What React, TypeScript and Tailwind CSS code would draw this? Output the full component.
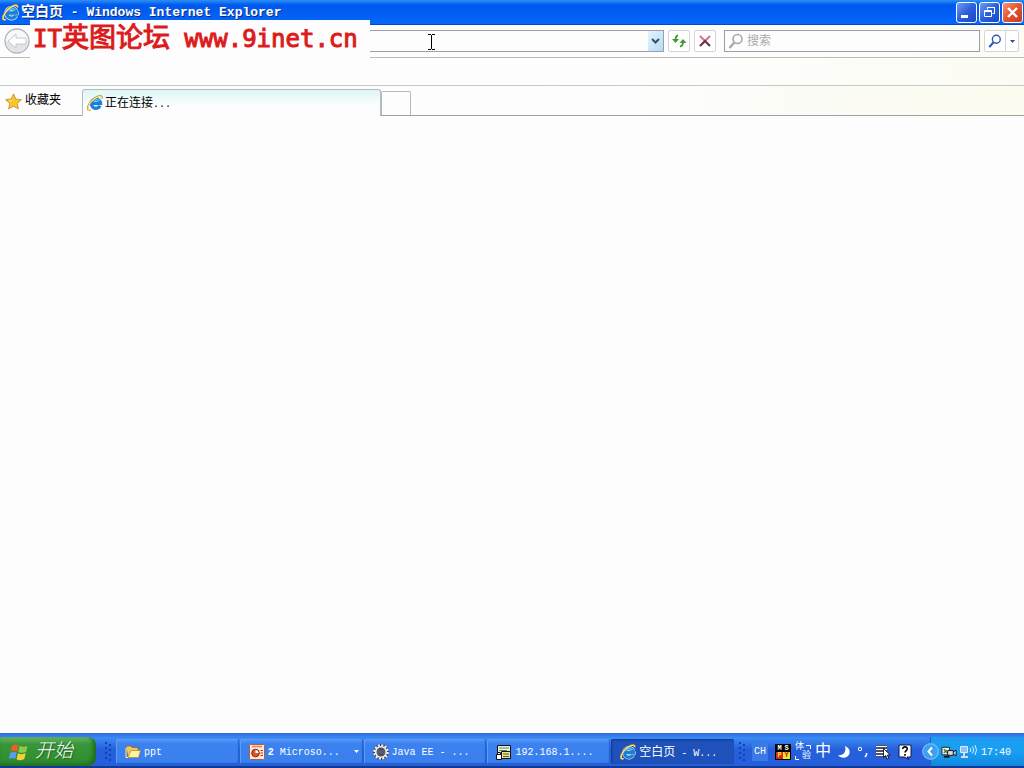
import React from "react";

function IeLogo({ className }: { className?: string }) {
  return (
    <svg viewBox="0 0 16 16" className={className} fill="none" aria-hidden="true">
      <path d="M13 10.800A4.600 4.600 0 1 1 13.500 8.400H5.500" stroke="#d4efff" strokeWidth="4.400" />
      <path d="M13 10.800A4.600 4.600 0 1 1 13.500 8.400H5.500" stroke="#1c7fd6" strokeWidth="3.200" />
      <path d="M4.800 7A4.600 4.600 0 0 1 12.500 6" stroke="#56bdf2" strokeWidth="1.600" />
      <path d="M3.600 14.700C.9 15.600.1 14 1.200 11.200 2.700 7.300 6.800 3 11 1.400c2.800-1.100 4.300-.2 3.700 2" stroke="#b98f2e" strokeWidth="1.800" />
      <path d="M3.600 14.500C1.200 15.200.5 13.800 1.500 11.200 3 7.500 6.900 3.200 11 1.700c2.500-1 3.800-.2 3.400 1.500" stroke="#fbe68c" strokeWidth="1.200" />
    </svg>
  );
}

function Magnifier({ color, className }: { color: string; className?: string }) {
  return (
    <svg viewBox="0 0 16 16" className={className} fill="none" stroke={color} aria-hidden="true">
      <circle cx="9.500" cy="6" r="4.500" strokeWidth="1.600" />
      <path d="M6.300 9.500 1.500 15" strokeWidth="2.400" />
    </svg>
  );
}

function Grip() {
  return (
    <svg viewBox="0 0 6 22" className="h-[22px] w-[6px] shrink-0" fill="#1440b0" aria-hidden="true">
      {[1, 6, 11, 16].map((y) => (
        <g key={y}>
          <rect x="0" y={y} width="2" height="2" />
          <rect x="4" y={y + 2} width="2" height="2" />
        </g>
      ))}
    </svg>
  );
}

function TitleBar() {
  const box =
    "flex h-[21px] w-[21px] items-center justify-center rounded-[3px] border border-white";
  const blue = "bg-linear-to-br from-[#6f9cf2] via-[#2b5fdc] to-[#1c49c4]";
  return (
    <header className="flex h-[25px] shrink-0 items-center bg-linear-to-b from-[#2e8ff5] via-[#0058ee] via-20% to-[#0668fa] pr-px pl-[2px] shadow-[inset_0_-1px_0_#0347cc]">
      <IeLogo className="h-[17px] w-[17px]" />
      <h1 className="ml-[2px] flex-1 text-[13px] leading-[20px] font-bold whitespace-pre text-white [text-shadow:1px_1px_0_#0a2a80]">
        <span className="text-[14px]">空白页</span> - Windows Internet Explorer
      </h1>
      <div className="flex gap-[2px]">
        <button aria-label="最小化" className={`${box} ${blue}`}>
          <svg viewBox="0 0 19 19" className="h-[19px] w-[19px]"><rect x="4" y="12" width="7" height="3" fill="#fff" /></svg>
        </button>
        <button aria-label="还原" className={`${box} ${blue}`}>
          <svg viewBox="0 0 19 19" className="h-[19px] w-[19px]" fill="none" stroke="#fff">
            <path d="M7.500 6.500V4.500h7v6h-2M7 4.500h8" />
            <path d="M4.500 7.500h7v6h-7zM4 8.500h8" />
          </svg>
        </button>
        <button aria-label="关闭" className={`${box} bg-linear-to-br from-[#f0957b] via-[#e2532f] to-[#c83a16]`}>
          <svg viewBox="0 0 19 19" className="h-[19px] w-[19px]" stroke="#fff" strokeWidth="2.400"><path d="m5 5 9 9M14 5l-9 9" /></svg>
        </button>
      </div>
    </header>
  );
}

function NavigationBar() {
  const tool = "flex h-[22px] items-center justify-center rounded-[2px] border border-[#d3d5d9] bg-white";
  return (
    <nav className="flex h-[33px] shrink-0 items-center border-b border-[#b9bdba] bg-linear-to-r from-[#fdfdfd] from-70% to-[#fcfcf4] pr-[5px] pl-[3px]">
      <button aria-label="后退" className="h-[28px] w-[28px] shrink-0">
        <svg viewBox="0 0 28 28" className="h-[28px] w-[28px]">
          <circle cx="14" cy="14" r="12" fill="#f8f9fa" stroke="#b2b6bb" strokeWidth="1.300" />
          <path d="M3 14a11 11 0 0 0 22 0z" fill="#dfe5ea" />
          <path d="m5 14 8-7v4h10v6H13v4z" fill="#fff" stroke="#c2cad1" />
        </svg>
      </button>
      <div className="flex h-[22px] flex-1 border border-[#9b9fa6] bg-[#fdfdfd]">
        <input aria-label="地址" className="min-w-0 flex-1 bg-transparent px-2 outline-none" />
        <button aria-label="显示地址栏列表" className="flex w-[15px] items-center justify-center bg-linear-to-br from-[#e6f4fb] to-[#b4dcf3]">
          <svg viewBox="0 0 9 6" className="h-[6px] w-[9px]" fill="none" stroke="#35506e" strokeWidth="2"><path d="m1 1 3.500 3.500L8 1" /></svg>
        </button>
      </div>
      <button aria-label="刷新" className={`${tool} ml-[4px] w-[22px]`}>
        <svg viewBox="0 0 16 14" className="h-[14px] w-[16px]" fill="none" stroke="#3c9b35" strokeWidth="1.800">
          <path d="M7 1.500Q4.500 2 4.500 6M9 12.500Q12 12 12 8" />
          <path d="M1 5h7L4.500 9zM8.500 9h7L12 5z" fill="#3c9b35" stroke="none" />
        </svg>
      </button>
      <button aria-label="停止" className={`${tool} ml-[4px] w-[22px]`}>
        <svg viewBox="0 0 12 12" className="h-[12px] w-[12px]" strokeWidth="2.200">
          <path d="m1 1 5 5 5-5" fill="none" stroke="#d5768a" />
          <path d="m1 11 5-5 5 5" fill="none" stroke="#6f2f45" />
        </svg>
      </button>
      <label className="ml-[8px] flex h-[22px] w-[256px] items-center border border-[#9b9fa6] bg-[#fdfdfd] pl-[3px]">
        <Magnifier color="#a9a9a9" className="h-[16px] w-[16px]" />
        <input aria-label="搜索" placeholder="搜索" className="ml-[3px] h-[20px] min-w-0 flex-1 bg-transparent pt-[2px] text-[12px] outline-none placeholder:text-[#ababab]" />
      </label>
      <div className="ml-[4px] flex h-[22px] w-[35px] rounded-[2px] border border-[#d3d5d9] bg-white">
        <button aria-label="开始搜索" className="flex w-[20px] items-center justify-center">
          <Magnifier color="#2d55b5" className="h-[14px] w-[14px]" />
        </button>
        <button aria-label="搜索选项" className="flex flex-1 items-center justify-center border-l border-[#d3d5d9]">
          <svg viewBox="0 0 5 3" className="h-[3px] w-[5px]"><path d="M0 0h5L2.500 3z" fill="#2d4f9f" /></svg>
        </button>
      </div>
    </nav>
  );
}

function TabRow() {
  return (
    <div className="flex h-[30px] shrink-0 items-end border-b border-[#9fa3a8] bg-linear-to-r from-[#fdfdfd] from-60% to-[#fbfbef] text-[12px] text-black">
      <button className="flex h-[28px] w-[82px] items-center gap-[3px] pl-[5px]">
        <svg viewBox="0 0 16 16" className="h-[17px] w-[17px]">
          <path d="m8 .8 2.200 4.900 5.200.6-3.900 3.500 1.100 5.200L8 12.400 3.400 15l1.100-5.200L.6 6.300l5.200-.6z" fill="#fbc52c" stroke="#c98d28" strokeWidth=".8" />
          <path d="M8 3 6.600 6.600 3 7.200l3 .8z" fill="#fff0a0" />
        </svg>
        <span>收藏夹</span>
      </button>
      <button className="-mb-px flex h-[27px] w-[299px] items-center gap-[2px] rounded-t-[3px] border border-b-0 border-[#b6babe] bg-linear-to-b from-[#dcf7f6] to-[#fdfdfd] to-60% pl-[4px]">
        <IeLogo className="h-[16px] w-[16px]" />
        <span className="pt-[2px]">正在连接<span className="text-[10px]">...</span></span>
      </button>
      <button aria-label="新选项卡" className="h-[24px] w-[30px] rounded-t-[2px] border border-b-0 border-[#b6babe] bg-[#fdfdfd]" />
    </div>
  );
}

function FolderIcon() {
  return (
    <svg viewBox="0 0 16 16" className="h-[16px] w-[16px]">
      <path d="M1 3.500 2 2h4l1 1.500h6V13H3z" fill="#f0c95c" stroke="#8a6a22" strokeWidth=".8" />
      <path d="m3 13.500 3-7h9.500l-2 7z" fill="#fff2a8" stroke="#b98e2c" strokeWidth=".8" />
      <path d="M1 4v9.500h2" fill="none" stroke="#fff2b5" />
    </svg>
  );
}

function PowerPointIcon() {
  return (
    <svg viewBox="0 0 16 16" className="h-[16px] w-[16px]">
      <rect x=".5" y=".5" width="15" height="15" rx="1" fill="#fbe6d8" stroke="#b85a3c" />
      <path d="M3 2.500h10" stroke="#d98465" strokeWidth="1.500" />
      <circle cx="6.500" cy="9" r="3.800" fill="#e0562c" stroke="#7c2a14" />
      <path d="M6.500 9V6A3 3 0 0 1 9.500 9z" fill="#fff" />
      <path d="M11.500 6.500H14M11.500 9H14M11.500 11.500H14" stroke="#b7401e" />
    </svg>
  );
}

function GearIcon() {
  return (
    <svg viewBox="0 0 16 16" className="h-[16px] w-[16px]">
      <circle cx="8" cy="8" r="8" fill="#2d3360" />
      <circle cx="8" cy="8" r="6.800" fill="none" stroke="#f4f4f4" strokeWidth="2" strokeDasharray="2.200 1.360" />
      <circle cx="8" cy="8" r="5.300" fill="#4b4a5c" stroke="#f4f4f4" strokeWidth="1.600" />
      <path d="M4 7h8M4 9h8" stroke="#77758a" strokeWidth=".8" />
    </svg>
  );
}

function TerminalIcon() {
  return (
    <svg viewBox="0 0 16 16" className="h-[16px] w-[16px]">
      <path d="M1.500 1.500h13v8h-13z" fill="#eef2e6" stroke="#111" />
      <path d="M3 4h10M3 6.500h8" stroke="#558a57" strokeWidth="1.200" />
      <path d="M5.500 7.500h9v7h-9z" fill="#f3e681" stroke="#111" />
      <path d="M7 10h6M7 12.500h6" stroke="#555" />
      <path d="M.5 10.500h5v5h-5zM1.500 10.500v-2h3v2" fill="#fff" stroke="#111" />
    </svg>
  );
}

function TaskButton({ icon, children, active, menu }: { icon: React.ReactNode; children: React.ReactNode; active?: boolean; menu?: boolean }) {
  return (
    <button
      className={`flex h-[25px] min-w-0 flex-1 items-center gap-[3px] rounded-[2px] pl-[9px] text-left text-[10px] whitespace-pre text-white ${
        active
          ? "bg-[#1e51b9] shadow-[inset_1px_1px_2px_#123a91]"
          : "bg-linear-to-b from-[#5596f6] via-[#3c81f0] via-20% to-[#397fee] shadow-[inset_-1px_-1px_1px_#2460cc,inset_1px_1px_0_#5d9cf7]"
      }`}
    >
      {icon}
      <span className="flex-1 pt-[2px]">{children}</span>
      {menu && <svg viewBox="0 0 5 3" className="mr-[4px] h-[3px] w-[5px]"><path d="M0 0h5L2.500 3z" fill="#fff" /></svg>}
    </button>
  );
}

function LanguageBar() {
  return (
    <div className="flex h-[28px] shrink-0 items-center gap-[4px] text-white">
      <span className="mr-[3px] bg-[#3b79e4] px-[2px] text-[10px] leading-[18px]">CH</span>
      <span className="flex h-[16px] w-[16px] flex-col border border-black bg-black text-center text-[7px] leading-[7px] font-bold">
        <span className="flex"><span className="flex-1">M</span><span className="flex-1">S</span></span>
        <span className="flex">
          <span className="flex-1 bg-[#d9251d] text-[#ffe62b]">P</span>
          <span className="flex-1 bg-[#f4e62a] text-[#c31818]">Y</span>
        </span>
      </span>
      <span className="relative flex h-[18px] w-[16px] flex-col text-[9px] leading-[9px]">
        <span className="self-start">体</span>
        <span className="self-end">验</span>
        <svg viewBox="0 0 16 18" className="absolute inset-0 h-[18px] w-[16px]" fill="none" stroke="#fff" aria-hidden="true">
          <path d="M11 2.500h4.500V6M.5 13v3.500H4" />
        </svg>
      </span>
      <span className="text-[16px] leading-[18px]">中</span>
      <svg viewBox="0 0 14 14" className="ml-[2px] h-[14px] w-[14px]"><path d="M8 1c5 2 6 7 3 10-3 3-8 2-10-1 4 1 9-2 7-9z" fill="#fff" /></svg>
      <svg viewBox="0 0 12 14" className="ml-[2px] h-[14px] w-[12px]" fill="none" stroke="#fff"><circle cx="3" cy="4" r="1.700" /><path d="M9.500 8v2l-1.500 2" strokeWidth="1.500" /></svg>
      <svg viewBox="0 0 16 16" className="ml-[2px] h-[16px] w-[16px]">
        <path d="M1 1h11v12H1z" fill="#10183c" />
        <path d="M1 2.500h11M1 5.500h11M1 8.500h9M1 11.500h9" stroke="#fff" strokeWidth="1.500" />
        <path d="M8.500 4.500v9l2.200-2 1.600 3.500 1.500-.8-1.500-3.200h3z" fill="#fff" stroke="#000" strokeWidth=".8" />
      </svg>
      <svg viewBox="0 0 14 16" className="ml-[3px] h-[16px] w-[14px]">
        <path d="M1 1h12v12H9l2 2.500L6.500 13H1z" fill="#fff" stroke="#101a50" />
        <path d="M4.700 5c0-3 4.800-2.600 4.600 0C9.200 6.600 7 6.700 7 8.500M7 10v1.800" fill="none" stroke="#000" strokeWidth="1.600" />
      </svg>
    </div>
  );
}

function Taskbar() {
  return (
    <footer className="flex h-[35px] shrink-0 items-center border-b-2 border-[#123a94] bg-linear-to-b from-[#2b6be0] via-[#3c8af3] via-15% to-[#255fdc] to-50% pt-[4px]">
      <button className="flex h-[29px] w-[96px] shrink-0 items-center gap-[6px] rounded-r-[8px] bg-linear-to-b from-[#67b465] via-[#38973a] via-25% to-[#2e8a2d] pl-[9px] shadow-[inset_-3px_-2px_4px_#1f6b20]">
        <svg viewBox="0 0 20 18" className="h-[18px] w-[20px]">
          <path d="M3 2.500Q6 .5 9.500 2.200L8 8.500Q5 7 1.500 8.700z" fill="#ee5c2c" />
          <path d="M10.700 2.700Q14 4.600 18.500 3L17 9Q13 10.600 9.300 8.900z" fill="#8ccb48" />
          <path d="M1.200 9.900Q4.500 8.300 7.700 9.700L6.200 15.700Q3 14.300 0 16z" fill="#5b9cf4" />
          <path d="M9 10.200Q12.500 12 16.700 10.300L15.200 16.300Q11 18 7.500 16.200z" fill="#fbcd3a" />
        </svg>
        <span className="text-[19px] leading-[24px] font-light text-white italic [text-shadow:1px_1px_1px_#1d5a1e]">开始</span>
      </button>
      <div className="mr-[5px] ml-[9px]"><Grip /></div>
      <div className="flex min-w-0 flex-1 gap-px">
        <TaskButton icon={<FolderIcon />}>ppt</TaskButton>
        <TaskButton icon={<PowerPointIcon />} menu><b>2</b> Microso...</TaskButton>
        <TaskButton icon={<GearIcon />}>Java EE - ...</TaskButton>
        <TaskButton icon={<TerminalIcon />}>192.168.1....</TaskButton>
        <TaskButton icon={<IeLogo className="h-[16px] w-[16px]" />} active>
          <span className="text-[12px]">空白页</span> - W...
        </TaskButton>
      </div>
      <div className="mr-[7px] ml-[5px]"><Grip /></div>
      <LanguageBar />
      <div className="ml-[18px] flex h-[29px] w-[94px] shrink-0 items-center border-l border-[#1560bc] bg-linear-to-b from-[#1e9cf0] via-[#18a0f3] to-[#1287df] text-white">
        <button aria-label="显示隐藏的图标" className="-ml-[9px] h-[17px] w-[17px] shrink-0">
          <svg viewBox="0 0 17 17" className="h-[17px] w-[17px]">
            <circle cx="8.500" cy="8.500" r="7.800" fill="#3fa0f3" stroke="#8fcaf8" />
            <path d="M10 4.500 6.500 8.500l3.500 4" fill="none" stroke="#fff" strokeWidth="2" />
          </svg>
        </button>
        <svg viewBox="0 0 18 14" className="ml-[2px] h-[14px] w-[17px]">
          <path d="M1 2h8v8H1z" fill="#f1f2e8" stroke="#222" />
          <path d="m3 4 5 5M3 8l3-3" stroke="#467c46" strokeWidth="1.500" />
          <path d="M7 5.500h6v5H7zM13 7l3-2v6l-3-2" fill="#ddd" stroke="#111" />
          <path d="M3 12h6" stroke="#111" strokeWidth="2" />
        </svg>
        <svg viewBox="0 0 18 16" className="ml-px h-[16px] w-[18px]" fill="none">
          <path d="M1.500 2.500h7v6h-7z" fill="#8fc1f4" stroke="#dcebff" />
          <path d="M5 9v3M2 13h7" stroke="#d4dce9" strokeWidth="2" />
          <path d="M11 4q1.500 2 0 4M13.500 2.500q2.500 3.500 0 7M16 1q3 5 0 10" stroke="#d5efff" />
        </svg>
        <time className="ml-[4px] pt-[2px] text-[10px]">17:40</time>
      </div>
    </footer>
  );
}

export default function App() {
  return (
    <div className="relative flex h-screen flex-col overflow-hidden bg-[#fdfdfd] font-['Liberation_Mono','Noto_Sans_CJK_SC',monospace]">
      <TitleBar />
      <NavigationBar />
      <div className="h-[28px] shrink-0 border-b border-[#c5c8c4] bg-linear-to-r from-[#fdfdfd] from-60% to-[#fcfcf4]" />
      <TabRow />
      <main className="min-h-0 flex-1 bg-[#fdfdfd]" />
      <Taskbar />
      <div className="absolute top-[20px] left-[30px] h-[40px] w-[340px] bg-[#fdfdfd] pl-[3px] font-['DejaVu_Sans_Mono','Noto_Sans_CJK_SC',monospace] text-[24px] leading-[36px] whitespace-pre text-[#dc1b1b] [-webkit-text-stroke:1px_#dc1b1b]">
        IT<span className="text-[27px]">英图论坛</span> www.9inet.cn
      </div>
      <svg viewBox="0 0 7 16" className="absolute top-[34px] left-[428px] h-[16px] w-[7px]" fill="none" stroke="#000" aria-hidden="true">
        <path d="M0 .5h3M4 .5h3M3.500 1v14M0 15.500h3M4 15.500h3" />
      </svg>
    </div>
  );
}
